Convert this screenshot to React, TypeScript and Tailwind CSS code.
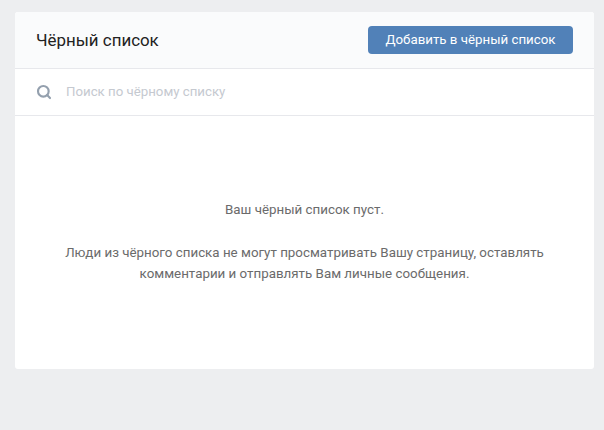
import { Search } from "lucide-react";

export default function App() {
  return (
    <div className="min-h-[430px] bg-[#edeef0] pt-3 pl-[15px] font-['Roboto',sans-serif]">
      <div className="w-[579px] h-[357px] flex flex-col bg-white rounded-[3px] overflow-hidden">
        {/* Header */}
        <div className="h-[57px] flex items-center justify-between pl-[21px] pr-[21px] bg-[#fafbfc] border-b border-[#e7e8ec]">
          <h1 className="text-[16.9px] leading-5 text-[#222222]">Чёрный список</h1>
          <button
            type="button"
            className="h-7 w-[205px] rounded-[4px] bg-[#5181b8] text-[13.3px] text-white flex items-center justify-center"
          >
            Добавить в чёрный список
          </button>
        </div>

        {/* Search */}
        <div className="h-[47px] flex items-center pl-[21px] border-b border-[#e7e8ec]">
          <Search className="w-4 h-4 text-[#94a0ae]" strokeWidth={3.25} />
          <span className="ml-[14px] text-[13.25px] text-[#c5c9d0]">Поиск по чёрному списку</span>
        </div>

        {/* Empty state */}
        <div className="flex-1 flex flex-col items-center pt-[83px] text-[13.35px] leading-[21px] text-[#6b6b6b] text-center">
          <p>Ваш чёрный список пуст.</p>
          <p className="mt-[22px]">
            Люди из чёрного списка не могут просматривать Вашу страницу, оставлять
            <br />
            комментарии и отправлять Вам личные сообщения.
          </p>
        </div>
      </div>
    </div>
  );
}
